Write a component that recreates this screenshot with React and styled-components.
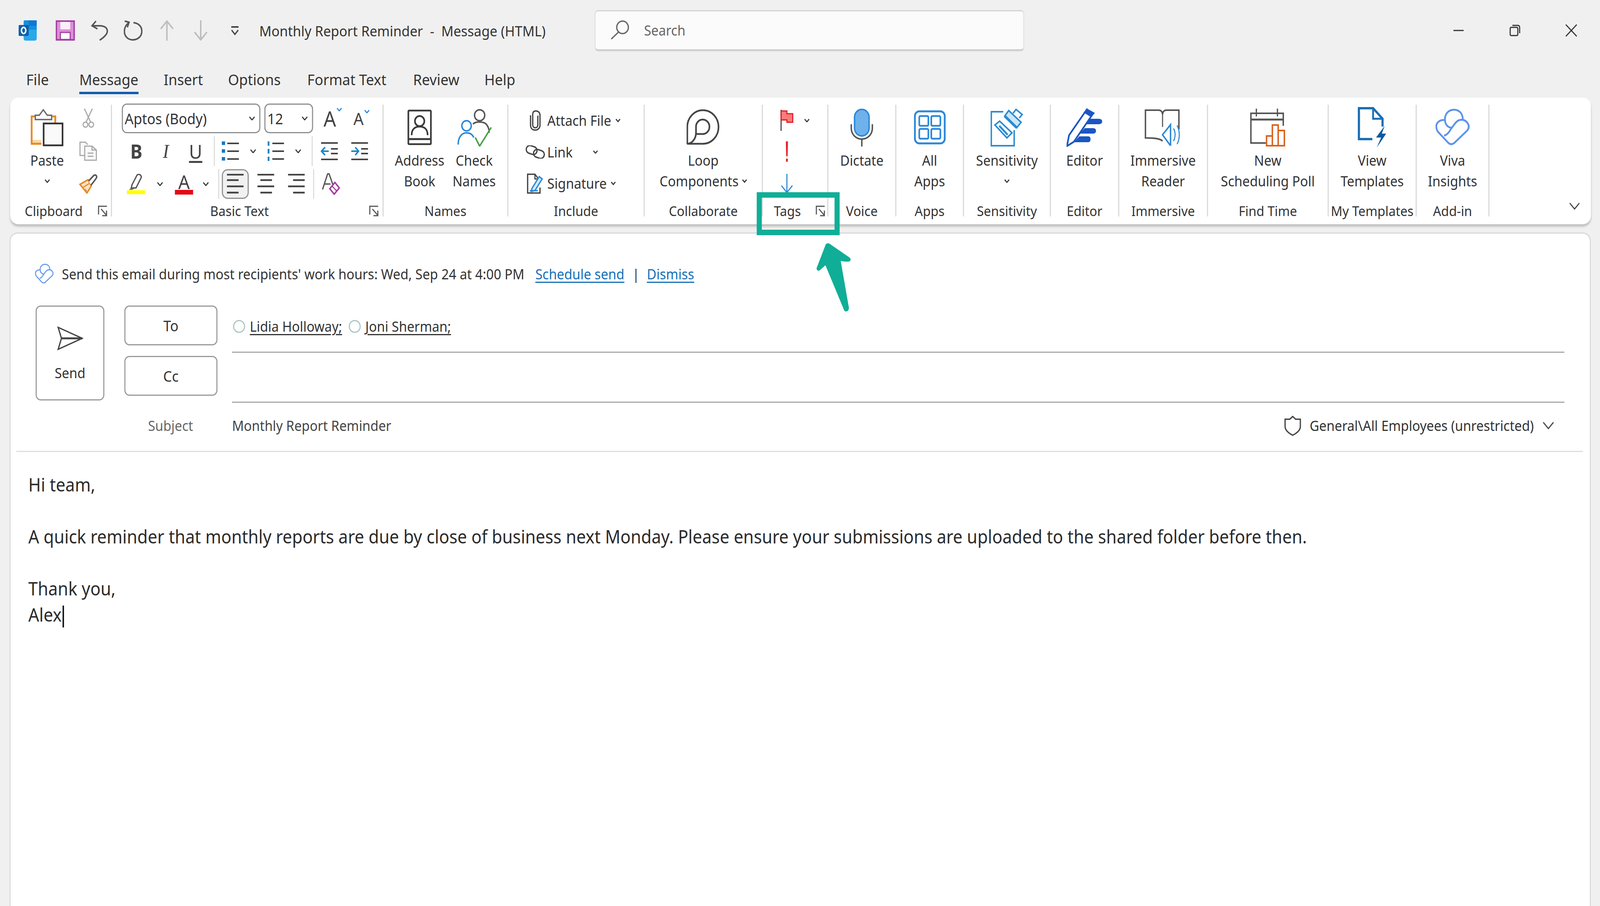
import React from "react";
import styled, { createGlobalStyle } from "styled-components";

const GlobalStyle = createGlobalStyle`
  html, body {
    margin: 0;
    padding: 0;
    background: #f0f0f0;
    overflow: hidden;
  }
  * {
    box-sizing: border-box;
  }
`;

const UI_FONT = `"Noto Sans", "Open Sans", sans-serif`;
const INK = "#3a3a3a";
const GREY = "#a8a8a8";
const BLUE = "#2b88d8";
const TEAL = "#10ae97";

const Chevron = ({ w = 16, color = INK }) => (
  <svg width={w} height={w * 0.65} viewBox="0 0 16 10.4" fill="none" stroke={color} strokeWidth={48 / w}>
    <path d="M1 1 L8 9 L15 1" />
  </svg>
);

const Launcher = () => (
  <svg width="28" height="30" viewBox="0 0 28 30" fill="none" stroke="#555" strokeWidth="3">
    <path d="M2 24 V3 H25" />
    <path d="M9 10 L24 26 M24 14 V27 H12" />
  </svg>
);

const OutlookLogo = () => (
  <svg width="52" height="52" viewBox="0 0 52 52">
    <rect x="14" y="0" width="36" height="30" rx="3" fill="#1490df" />
    <path d="M14 24 H50 V46 Q50 52 44 52 H20 Q14 52 14 46 Z" fill="#28a8ea" />
    <path d="M28 0 H50 V14 H28 Z" fill="#0f78d4" />
    <rect x="0" y="12" width="28" height="28" rx="3" fill="#0f5fa8" />
    <ellipse cx="14" cy="26" rx="6" ry="8" fill="none" stroke="#fff" strokeWidth="4" />
  </svg>
);

const SaveIcon = () => (
  <svg width="53" height="52" viewBox="0 0 53 52">
    <rect x="2" y="2" width="49" height="48" fill="#dd8fda" stroke="#a33ea1" strokeWidth="4" />
    <rect x="13" y="4" width="27" height="19" fill="#fbeefb" />
    <rect x="13" y="31" width="27" height="18" fill="#fff" stroke="#a33ea1" strokeWidth="3" />
  </svg>
);

const UndoIcon = () => (
  <svg width="48" height="52" viewBox="0 0 48 52" fill="none" stroke="#555" strokeWidth="4">
    <path d="M14 2 L3 14 L18 22" />
    <path d="M4 14 H24 C38 14 46 20 45 29 C44 38 32 46 24 51" />
  </svg>
);

const RedoIcon = () => (
  <svg width="52" height="52" viewBox="0 0 52 52" fill="none" stroke="#555" strokeWidth="4">
    <path d="M3 2 L15 5 L10 18" />
    <path d="M14 6 C6 12 2 20 2 28 C2 41 12 50 25 50 C39 50 50 41 50 28 C50 15 40 7 27 6" />
  </svg>
);

const StepArrow = ({ down }) => (
  <svg width="38" height="52" viewBox="0 0 38 52" fill="none" stroke="#bdbdbd" strokeWidth="4">
    {down ? <path d="M19 0 V50 M2 30 L19 50 L36 30" /> : <path d="M19 52 V2 M2 22 L19 2 L36 22" />}
  </svg>
);

const CustomizeIcon = () => (
  <svg width="24" height="24" viewBox="0 0 24 24" fill="none" stroke="#444" strokeWidth="4">
    <path d="M2 3 H22" />
    <path d="M3 11 L12 22 L21 11" strokeWidth="3.5" />
  </svg>
);

const SearchIcon = () => (
  <svg width="56" height="50" viewBox="0 0 56 50" fill="none" stroke="#666" strokeWidth="3.5">
    <circle cx="34" cy="18" r="16" />
    <path d="M23 30 L3 48" />
  </svg>
);

const WinIcon = ({ kind }) => (
  <svg width="36" height="36" viewBox="0 0 36 36" fill="none" stroke="#333" strokeWidth="3">
    {kind === "min" && <path d="M4 18 H32" />}
    {kind === "restore" && (
      <>
        <rect x="5" y="10" width="21" height="21" rx="3" />
        <path d="M11 5 H26 Q31 5 31 10 V25" />
      </>
    )}
    {kind === "close" && <path d="M3 3 L33 33 M33 3 L3 33" />}
  </svg>
);

const PasteIcon = () => (
  <svg width="91" height="97" viewBox="0 0 91 97" fill="none">
    <path d="M3 80 H30 V92 H3 Z" fill="#f9d9a8" />
    <path d="M12 20 H3 V90 H30" stroke="#e58a25" strokeWidth="5" />
    <path d="M60 20 H68 V36" stroke="#e58a25" strokeWidth="5" />
    <path d="M13 28 V17 H24 L35 3 L46 17 H58 V28 Z" fill="#fff" stroke="#666" strokeWidth="3.5" />
    <rect x="36" y="38" width="52" height="56" fill="#fafafa" stroke="#333" strokeWidth="4.5" />
  </svg>
);

const CutIcon = () => (
  <svg width="32" height="50" viewBox="0 0 32 50" fill="none" stroke={GREY} strokeWidth="3">
    <path d="M5 0 L22 34 M27 0 L10 34" />
    <circle cx="8" cy="41" r="6.5" />
    <circle cx="24" cy="41" r="6.5" />
  </svg>
);

const CopyIcon = () => (
  <svg width="52" height="50" viewBox="0 0 52 50" fill="#fafafa" stroke={GREY} strokeWidth="3">
    <path d="M18 36 H3 V2 H18 L24 8" />
    <path d="M16 12 H36 L48 22 V48 H16 Z" />
    <path d="M36 12 V22 H48 M24 30 H40 M24 38 H40" fill="none" />
  </svg>
);

const PainterIcon = () => (
  <svg width="52" height="50" viewBox="0 0 52 50" fill="none">
    <path d="M3 26 L25 14 L34 30 L22 48 Z" fill="#fbe3c4" stroke="#e58a25" strokeWidth="4" />
    <path d="M12 33 L28 24 M18 38 L22 48" stroke="#e58a25" strokeWidth="3" />
    <path d="M27 17 L41 3 Q48 0 49 7 Q49 10 33 28" fill="#fff" stroke="#555" strokeWidth="4" />
  </svg>
);

const ListIcon = ({ numbered }) => (
  <svg width="50" height="50" viewBox="0 0 50 50" fill="none">
    {[5, 25, 45].map((y, i) =>
      numbered ? (
        <NumberMark key={y} $y={y} />
      ) : (
        <rect key={y} x="1" y={y - 5} width="9" height="9" fill="#0f79c2" />
      )
    )}
    <path d="M16 5 H48 M16 25 H48 M16 45 H48" stroke="#444" strokeWidth="4" />
  </svg>
);

const NumberMark = styled.rect.attrs((p) => ({
  x: 3,
  y: p.$y - 6,
  width: 5,
  height: 12,
}))`
  fill: #1a86c8;
`;

const IndentIcon = ({ right }) => (
  <svg width="48" height="48" viewBox="0 0 48 48" fill="none">
    <path d="M1 3 H47 M1 45 H47 M28 18 H47 M28 30 H47" stroke="#444" strokeWidth="4" />
    {right ? (
      <path d="M1 24 H20 M12 14 L21 24 L12 34" stroke="#1a86c8" strokeWidth="4" />
    ) : (
      <path d="M22 24 H3 M12 14 L2 24 L12 34" stroke="#1a86c8" strokeWidth="4" />
    )}
  </svg>
);

const AlignIcon = ({ align }) => {
  const short = align === "left" ? "M0 16 H32 M0 48 H32" : align === "center" ? "M8 16 H40 M8 48 H40" : "M14 16 H46 M14 48 H46";
  return (
    <svg width="46" height="52" viewBox="0 0 46 52" fill="none" stroke="#444" strokeWidth="4.5">
      <path d="M0 2 H46 M0 32 H46" />
      <path d={short} />
    </svg>
  );
};

const HighlightIcon = () => (
  <svg width="50" height="52" viewBox="0 0 50 52">
    <path d="M14 28 L28 3 Q34 -1 38 4 Q41 8 38 12 L25 36 L12 36 Z" fill="#fff" stroke="#555" strokeWidth="3.5" />
    <path d="M11 36 H25 L14 41 H6 Z" fill="#666" />
    <rect x="0" y="42" width="50" height="10" fill="#ffff00" />
  </svg>
);

const EraserA = () => (
  <svg width="50" height="56" viewBox="0 0 50 56" fill="none">
    <path d="M2 42 L16 2 H20 L32 34 M8 28 H24" stroke="#555" strokeWidth="3.5" />
    <path d="M36 24 L48 38 L34 54 L22 40 Z" fill="#fff" stroke="#a33ea1" strokeWidth="4" />
    <path d="M28 33 L41 46" stroke="#a33ea1" strokeWidth="3" />
  </svg>
);

const BookIcon = () => (
  <svg width="68" height="92" viewBox="0 0 68 92" fill="none" stroke="#3a3a3a" strokeWidth="4.5">
    <rect x="3" y="3" width="62" height="86" rx="2" />
    <path d="M3 76 H65" strokeWidth="5" />
    <circle cx="34" cy="30" r="13" />
    <path d="M12 66 C12 50 22 44 34 44 C46 44 56 50 56 66" />
  </svg>
);

const CheckNamesIcon = () => (
  <svg width="95" height="97" viewBox="0 0 95 97" fill="none">
    <circle cx="62" cy="17" r="14" stroke="#555" strokeWidth="4" />
    <path d="M44 40 C48 32 76 32 82 42 C88 50 88 56 88 62" stroke="#555" strokeWidth="4" />
    <circle cx="26" cy="44" r="13" stroke={BLUE} strokeWidth="4" />
    <path d="M3 92 C3 74 12 62 26 62 C36 62 42 66 46 74" stroke={BLUE} strokeWidth="4" />
    <path d="M50 74 L62 96 L94 48" stroke="#44a047" strokeWidth="4" />
  </svg>
);

const ClipIcon = () => (
  <svg width="34" height="54" viewBox="0 0 34 54" fill="none" stroke="#444" strokeWidth="3.5">
    <path d="M24 15 V39 C24 44 20 46 17 46 C14 46 10 44 10 39 V12 C10 6 13 3 18 3 C26 3 30 8 30 14 V39 C30 47 24 52 17 52 C9 52 4 47 4 39 V14" />
  </svg>
);

const LinkIcon = () => (
  <svg width="54" height="34" viewBox="0 0 54 34" fill="none" stroke="#444" strokeWidth="3.5">
    <rect x="2" y="2" width="30" height="20" rx="10" transform="rotate(18 17 12)" />
    <rect x="22" y="12" width="30" height="20" rx="10" transform="rotate(18 37 22)" />
  </svg>
);

const SignatureIcon = () => (
  <svg width="46" height="52" viewBox="0 0 46 52" fill="none">
    <path d="M32 14 L22 2 H2 V50 H36 V36" stroke="#444" strokeWidth="3.5" />
    <path d="M22 2 V14 H32" stroke="#444" strokeWidth="3" />
    <path d="M14 38 L34 8 L42 14 L22 44 L12 46 Z" fill="#d3e8fa" stroke={BLUE} strokeWidth="3.5" />
    <path d="M8 44 H30" stroke={BLUE} strokeWidth="3.5" />
  </svg>
);

const LoopIcon = () => (
  <svg width="92" height="92" viewBox="0 0 92 92" fill="none" stroke="#444" strokeWidth="4.5">
    <path d="M2 89 V45 A43 43 0 1 1 45 88 H2 Z" />
    <path d="M26 62 V45 A18.5 18.5 0 1 1 44 63 H26" />
    <path d="M26 60 C26 76 14 88 2 88" />
  </svg>
);

const MicIcon = () => (
  <svg width="64" height="97" viewBox="0 0 64 97" fill="none">
    <rect x="12" y="2" width="40" height="68" rx="20" fill="#6fb1ea" stroke={BLUE} strokeWidth="4" />
    <path d="M3 40 V50 C3 66 16 78 32 78 C48 78 61 66 61 50 V40" stroke="#555" strokeWidth="4" />
    <path d="M32 78 V97" stroke="#555" strokeWidth="4" />
  </svg>
);

const AppsIcon = () => (
  <svg width="88" height="88" viewBox="0 0 88 88" fill="none" stroke={BLUE} strokeWidth="4.5">
    <rect x="3" y="3" width="82" height="82" rx="12" strokeWidth="5" />
    <rect x="15" y="15" width="25" height="25" rx="3" />
    <rect x="48" y="15" width="25" height="25" rx="3" />
    <rect x="15" y="48" width="25" height="25" rx="3" />
    <rect x="48" y="48" width="25" height="25" rx="3" />
  </svg>
);

const SensitivityIcon = () => (
  <svg width="90" height="97" viewBox="0 0 90 97" fill="none" stroke="#2b8ad0" strokeWidth="4">
    <path d="M35 8 H2 V95 H65 V55" />
    <path d="M12 42 L25 32 L59 62 L45 75 Z" fill="#f4f9fd" />
    <path d="M24 44 L47 67" strokeWidth="5" />
    <path d="M39 19 L50 5 L84 35 L72 49 Z" fill="#cfe6f7" />
    <path d="M39 19 L72 49" strokeWidth="7" />
    <path d="M62 12 L70 2 L87 15 L79 24" fill="#f4f9fd" />
  </svg>
);

const EditorIcon = () => (
  <svg width="100" height="100" viewBox="0 0 100 100">
    <path d="M58 28 H88 Q98 28 98 35 Q98 42 88 42 H48 Z" fill="#1a56c4" />
    <path d="M50 52 H73 Q81 52 81 59 Q81 66 73 66 H36 Z" fill="#1a56c4" />
    <path d="M35 73 H60 Q66 73 66 80 Q66 88 60 88 H21 Z" fill="#1a56c4" />
    <path d="M1 98 L7 70 L56 4 L72 16 L20 87 Z" fill="#fff" stroke="#1a56c4" strokeWidth="4.5" />
    <path d="M56 2 L78 13 L68 24 L47 12 Z" fill="#1a56c4" />
  </svg>
);

const ImmersiveIcon = () => (
  <svg width="102" height="94" viewBox="0 0 102 94" fill="none">
    <path d="M50 82 C44 76 30 74 3 74 V3 H40 C46 3 50 8 50 14 C50 8 54 3 60 3 H95 V52" stroke="#555" strokeWidth="4" />
    <path d="M50 14 V46" stroke="#555" strokeWidth="3" />
    <path d="M50 66 L72 40 V94 Z" fill="#fff" stroke={BLUE} strokeWidth="4" />
    <path d="M80 50 C86 58 86 72 80 82 M90 42 C98 56 98 76 90 90" stroke={BLUE} strokeWidth="3" />
  </svg>
);

const ScheduleIcon = () => (
  <svg width="98" height="97" viewBox="0 0 98 97" fill="none">
    <path d="M44 88 H3 V12 H92 V44" stroke="#555" strokeWidth="4" />
    <path d="M3 28 H92" stroke="#555" strokeWidth="5" />
    <path d="M18 0 V20 M76 0 V20" stroke="#555" strokeWidth="3.5" />
    <path d="M46 95 V70 H62 V42 H78 V56 H95 V95 Z M62 70 V95 M78 56 V95" fill="#fff" stroke="#d9601c" strokeWidth="4" />
  </svg>
);

const TemplateIcon = () => (
  <svg width="78" height="104" viewBox="0 0 78 104" fill="none">
    <path d="M40 82 H3 V3 H42 L68 30 V50" stroke="#1a6fb5" strokeWidth="6" />
    <path d="M42 3 V30 H68" stroke="#1a6fb5" strokeWidth="5" />
    <path d="M74 48 L50 78 H64 L52 104 L78 68 H66 Z" fill="#0b5a9e" />
  </svg>
);

const VivaIcon = ({ size = 96 }) => (
  <svg width={size} height={size} viewBox="0 0 100 100" fill="none" stroke="#5d93ea" strokeWidth="5">
    <path d="M28 32 C26 14 38 3 54 3 C68 3 78 12 79 28" />
    <path d="M28 31 C28 42 36 51 48 51" />
    <path d="M28 31 C14 28 2 38 3 48 Q3 56 8 62 L37 91 Q45 98 54 92 L92 58 Q100 48 92 38 Q84 28 72 30 C66 30 62 34 58 38 L45 54 Q36 70 25 72" />
    <path d="M27 80 L36 60" stroke="none" />
  </svg>
);

const SendIcon = () => (
  <svg width="72" height="62" viewBox="0 0 72 62" fill="none" stroke="#444" strokeWidth="3.5">
    <path d="M3 3 L69 31 L3 59 L12 31 Z" />
    <path d="M12 31 H69" strokeWidth="5" />
  </svg>
);

const ShieldIcon = () => (
  <svg width="46" height="52" viewBox="0 0 46 52" fill="none" stroke="#444" strokeWidth="3.5">
    <path d="M23 2 L31 9 L44 9 V28 C44 38 32 46 23 50 C14 46 2 38 2 28 V9 L15 9 Z" />
  </svg>
);

// the browser may cap the window below the 4400px the design is laid out at
const Viewport = styled.div`
  width: 100vw;
  height: 100vh;
  overflow: hidden;
`;

const Page = styled.div`
  position: relative;
  width: 4400px;
  height: 2319px;
  overflow: hidden;
  display: flex;
  flex-direction: column;
  transform-origin: 0 0;
  background: #f0f0f0;
  color: #2b2b2b;
  font-family: ${UI_FONT};
`;

const TitleBar = styled.div`
  height: 156px;
  display: flex;
  align-items: center;
  padding-left: 51px;
`;

const QuickItem = styled.div`
  display: flex;
  margin-right: ${(p) => p.$gap}px;
`;

const WindowTitle = styled.div`
  width: 922px;
  font-size: 37px;
  white-space: pre;
  color: #333;
`;

const SearchBox = styled.div`
  width: 1182px;
  height: 105px;
  display: flex;
  align-items: center;
  gap: 37px;
  padding-left: 40px;
  background: #fbfbfb;
  border: 3px solid #e2e2e2;
  border-top-color: #d4d4d4;
  border-bottom: 5px solid #cfcfcf;
  border-radius: 10px;
  font-size: 36px;
  color: #666;
`;

const WindowControls = styled.div`
  margin-left: auto;
  display: flex;
  gap: 119px;
  padding-right: 61px;
`;

const TabBar = styled.div`
  height: 94px;
  display: flex;
  padding-left: 72px;
`;

const Tab = styled.div`
  width: ${(p) => p.$w}px;
  padding-top: 21px;
  font-size: 39px;
  line-height: 52px;
  color: #333;

  span {
    display: inline-block;
    padding-bottom: 6px;
    border-bottom: 6px solid ${(p) => (p.$active ? "#0f5cad" : "transparent")};
  }
`;

const Ribbon = styled.div`
  height: 324px;
  margin: 0 25px 0 28px;
  padding: 18px 0 20px;
  display: flex;
  background: #fff;
  border-radius: 22px;
  box-shadow: 0 6px 6px rgba(0, 0, 0, 0.2);
`;

const Group = styled.div`
  width: ${(p) => p.$w}px;
  flex-shrink: 0;
  display: flex;
  flex-direction: column;
  border-right: 3px solid #d8d8d8;
`;

const GroupBody = styled.div`
  flex: 1;
  min-height: 0;
  padding-left: ${(p) => p.$pl ?? 0}px;
  display: flex;
  justify-content: ${(p) => p.$justify || "center"};
`;

const GroupFooter = styled.div`
  height: 44px;
  padding: 16px ${(p) => p.$pr ?? 0}px 0 ${(p) => p.$pl ?? 0}px;
  display: flex;
  align-items: center;
  justify-content: ${(p) => (p.$center ? "center" : "space-between")};
  font-size: 35px;
  line-height: 28px;
  color: #333;
  white-space: nowrap;
`;

const TallButton = styled.div`
  display: flex;
  flex-direction: column;
  align-items: center;
  width: ${(p) => (p.$w ? `${p.$w}px` : "auto")};
  font-size: 36px;
  line-height: 53px;
  text-align: center;
  white-space: nowrap;
  color: #333;
`;

const IconSlot = styled.div`
  height: 116px;
  display: flex;
  align-items: center;
  justify-content: center;
`;

const LabelLine = styled.div`
  display: flex;
  align-items: center;
  justify-content: center;
  gap: 10px;
  height: 53px;
`;

const SmallColumn = styled.div`
  width: 52px;
  display: flex;
  flex-direction: column;
  align-items: center;
  gap: 34px;
  padding-top: 10px;
`;

const ToolRows = styled.div`
  display: flex;
  flex-direction: column;
  gap: 8px;
  margin-top: -3px;
  padding-left: 27px;
`;

const ToolRow = styled.div`
  height: 76px;
  display: flex;
  align-items: center;
`;

const FieldBox = styled.div`
  width: ${(p) => p.$w}px;
  height: 76px;
  margin-right: ${(p) => p.$mr}px;
  padding: 0 12px 0 5px;
  display: flex;
  align-items: center;
  justify-content: space-between;
  border: 3px solid #8f8f8f;
  border-radius: 14px;
  font-size: 38px;
  color: #333;
`;

const Cell = styled.div`
  width: ${(p) => p.$w}px;
  display: flex;
  align-items: center;
  justify-content: center;
  flex-shrink: 0;
`;

const RowDivider = styled.div`
  width: 3px;
  height: 76px;
  margin: 0 ${(p) => p.$mr ?? 0}px 0 ${(p) => p.$ml ?? 0}px;
  flex-shrink: 0;
  background: #dcdcdc;
`;

const SizedA = styled.span`
  font-size: ${(p) => p.$size}px;
  line-height: 1;
  color: #444;
`;

const GrowWrap = styled.div`
  display: flex;
  align-items: flex-start;
  gap: 2px;
`;

const FormatGlyph = styled.span`
  font-family: ${(p) => (p.$italic ? `"Liberation Serif", serif` : UI_FONT)};
  font-size: 50px;
  font-weight: ${(p) => (p.$bold ? 700 : 400)};
  font-style: ${(p) => (p.$italic ? "italic" : "normal")};
  text-decoration: ${(p) => (p.$under ? "underline" : "none")};
  text-underline-offset: 6px;
  line-height: 1;
  color: #444;
`;

const ColorA = styled.div`
  width: 50px;
  display: flex;
  flex-direction: column;
  align-items: center;
  font-size: 50px;
  line-height: 42px;
  color: #444;

  &::after {
    content: "";
    width: 50px;
    height: 12px;
    background: #e50914;
  }
`;

const ActiveAlign = styled.div`
  width: 74px;
  height: 76px;
  display: flex;
  align-items: center;
  justify-content: center;
  flex-shrink: 0;
  background: #f1f1f1;
  border: 3px solid #8f8f8f;
  border-radius: 16px;
`;

const IncludeList = styled.div`
  display: flex;
  flex-direction: column;
  padding-left: 40px;
  width: 100%;
`;

const IncludeItem = styled.div`
  height: 84px;
  display: flex;
  align-items: center;
  font-size: 36px;
  color: #333;
`;

const ItemIconBox = styled.div`
  width: 67px;
  display: flex;
  justify-content: center;
`;

const ChevronGap = styled.span`
  display: flex;
  margin-left: ${(p) => p.$ml}px;
`;

const TagStack = styled.div`
  display: flex;
  flex-direction: column;
  align-items: flex-start;
  padding-left: 48px;
  width: 100%;
`;

const TagRow = styled.div`
  height: 84px;
  display: flex;
  align-items: center;
  gap: 30px;
`;

const RibbonCollapse = styled.div`
  margin-left: auto;
  margin-top: 250px;
  margin-right: 30px;
  display: flex;
`;

const ComposeCard = styled.div`
  flex: 1;
  margin: 21px 25px 0 26px;
  display: flex;
  flex-direction: column;
  background: #fff;
  border: 3px solid #d8d8d8;
  border-bottom: none;
  border-radius: 22px 22px 0 0;
`;

const InfoBar = styled.div`
  height: 66px;
  margin-top: 70px;
  padding-left: 67px;
  display: flex;
  align-items: center;
  font-size: 36px;
  color: #333;
  white-space: pre;
`;

const InfoLink = styled.a`
  color: #1570b8;
  text-decoration: underline;
  text-underline-offset: 6px;
`;

const InfoText = styled.span`
  margin-left: ${(p) => p.$ml}px;
`;

const HeaderRow = styled.div`
  margin-top: 48px;
  padding-left: 69px;
  padding-right: 70px;
  display: flex;
`;

const SendButton = styled.div`
  width: 189px;
  height: 243px;
  padding-top: 50px;
  display: flex;
  flex-direction: column;
  align-items: center;
  gap: 33px;
  border: 3px solid #9a9a9a;
  border-radius: 14px;
  font-size: 36px;
  color: #333;
`;

const AddressButtons = styled.div`
  width: 256px;
  margin-left: 55px;
  display: flex;
  flex-direction: column;
  gap: 27px;
`;

const AddressButton = styled.div`
  height: 102px;
  display: flex;
  align-items: center;
  justify-content: center;
  border: 3px solid #9a9a9a;
  border-radius: 14px;
  font-size: 38px;
  color: #333;
`;

const AddressFields = styled.div`
  flex: 1;
  margin-left: 40px;
  display: flex;
  flex-direction: column;
`;

const AddressField = styled.div`
  height: ${(p) => p.$h}px;
  display: flex;
  align-items: flex-start;
  padding: 29px 0 0 3px;
  border-bottom: 3px solid #a8a8a8;
  font-size: 36px;
  color: #333;
  white-space: nowrap;
`;

const Recipient = styled.span`
  display: inline-flex;
  align-items: center;
  margin-right: 18px;
  gap: 13px;

  u {
    text-underline-offset: 6px;
  }
`;

const Presence = styled.i`
  width: 33px;
  height: 33px;
  border-radius: 50%;
  border: 3px solid #a9c6c2;
  flex-shrink: 0;
`;

const SubjectRow = styled.div`
  height: 126px;
  margin: 0 19px 0 16px;
  padding: 0 79px 6px 362px;
  display: flex;
  align-items: center;
  border-bottom: 3px solid #dedede;
  font-size: 36px;
`;

const SubjectLabel = styled.div`
  width: 231px;
  color: #666;
`;

const SubjectText = styled.div`
  color: #444;
`;

const ClassificationBox = styled.div`
  margin-left: auto;
  display: flex;
  align-items: center;
  color: #333;
`;

const ClassificationText = styled.span`
  margin: 0 24px;
`;

const MessageBody = styled.div`
  margin-top: 50px;
  padding-left: 49px;
  font-size: 46.6px;
  line-height: 66.5px;
  color: #2b2b2b;
`;

const BodyLine = styled.div`
  min-height: 66.5px;
  white-space: nowrap;
`;

const Caret = styled.span`
  display: inline-block;
  width: 4px;
  height: 56px;
  margin-left: 2px;
  vertical-align: middle;
  background: #111;
`;

const TealBox = styled.div`
  position: absolute;
  left: 2081px;
  top: 492px;
  width: 228px;
  height: 110px;
  border: 14px solid ${TEAL};
`;

const TealArrow = styled.svg`
  position: absolute;
  left: 2240px;
  top: 615px;
`;

const PasteSlot = styled.div`
  margin-left: 14px;
`;

const tabs = [
  ["File", 146],
  ["Message", 232, true],
  ["Insert", 177],
  ["Options", 218],
  ["Format Text", 291],
  ["Review", 196],
  ["Help", 84],
];

const Tall = ({ icon, lines, chevron, w }) => (
  <TallButton $w={w}>
    <IconSlot>{icon}</IconSlot>
    {lines.map((line, i) => (
      <LabelLine key={line}>
        {line}
        {chevron === "inline" && i === lines.length - 1 && <Chevron w={13} />}
      </LabelLine>
    ))}
    {chevron === "below" && (
      <LabelLine>
        <Chevron w={14} />
      </LabelLine>
    )}
  </TallButton>
);

const SingleGroup = ({ w, label, ...rest }) => (
  <Group $w={w}>
    <GroupBody>
      <Tall {...rest} />
    </GroupBody>
    <GroupFooter $center>{label}</GroupFooter>
  </Group>
);

export default function App() {
  const fit = window.innerWidth / 4400;

  return (
    <Viewport>
      <GlobalStyle />
      <Page style={{ transform: `scaleX(${fit})` }}>
        <TitleBar>
          <QuickItem $gap={50}><OutlookLogo /></QuickItem>
          <QuickItem $gap={44}><SaveIcon /></QuickItem>
          <QuickItem $gap={42}><UndoIcon /></QuickItem>
          <QuickItem $gap={48}><RedoIcon /></QuickItem>
          <QuickItem $gap={55}><StepArrow /></QuickItem>
          <QuickItem $gap={63}><StepArrow down /></QuickItem>
          <QuickItem $gap={55}><CustomizeIcon /></QuickItem>
          <WindowTitle>Monthly Report Reminder  -  Message (HTML)</WindowTitle>
          <SearchBox>
            <SearchIcon />
            Search
          </SearchBox>
          <WindowControls>
            <WinIcon kind="min" />
            <WinIcon kind="restore" />
            <WinIcon kind="close" />
          </WindowControls>
        </TitleBar>

        <TabBar>
          {tabs.map(([name, w, active]) => (
            <Tab key={name} $w={w} $active={active}>
              <span>{name}</span>
            </Tab>
          ))}
        </TabBar>

        <Ribbon>
          <Group $w={280}>
            <GroupBody $justify="flex-start">
              <PasteSlot>
                <TallButton $w={175}>
                  <IconSlot><PasteIcon /></IconSlot>
                  <LabelLine>Paste</LabelLine>
                  <LabelLine><Chevron w={14} /></LabelLine>
                </TallButton>
              </PasteSlot>
              <SmallColumn>
                <CutIcon />
                <CopyIcon />
                <PainterIcon />
              </SmallColumn>
            </GroupBody>
            <GroupFooter $pl={40} $pr={8}>
              Clipboard
              <Launcher />
            </GroupFooter>
          </Group>

          <Group $w={747}>
            <GroupBody $justify="flex-start">
              <ToolRows>
                <ToolRow>
                  <FieldBox $w={381} $mr={11}>
                    Aptos (Body)
                    <Chevron />
                  </FieldBox>
                  <FieldBox $w={134} $mr={24}>
                    12
                    <Chevron />
                  </FieldBox>
                  <Cell $w={60}>
                    <GrowWrap>
                      <SizedA $size={54}>A</SizedA>
                      <Chevron w={14} color={BLUE} />
                    </GrowWrap>
                  </Cell>
                  <Cell $w={24} />
                  <Cell $w={50}>
                    <GrowWrap>
                      <SizedA $size={44}>A</SizedA>
                      <Chevron w={14} color={BLUE} />
                    </GrowWrap>
                  </Cell>
                </ToolRow>
                <ToolRow>
                  <Cell $w={80}><FormatGlyph $bold>B</FormatGlyph></Cell>
                  <Cell $w={82}><FormatGlyph $italic>I</FormatGlyph></Cell>
                  <Cell $w={82}><FormatGlyph $under>U</FormatGlyph></Cell>
                  <RowDivider $ml={9} $mr={18} />
                  <Cell $w={50}><ListIcon /></Cell>
                  <Cell $w={74}><Chevron /></Cell>
                  <Cell $w={50}><ListIcon numbered /></Cell>
                  <Cell $w={74}><Chevron /></Cell>
                  <RowDivider $mr={22} />
                  <Cell $w={48}><IndentIcon /></Cell>
                  <Cell $w={35} />
                  <Cell $w={48}><IndentIcon right /></Cell>
                </ToolRow>
                <ToolRow>
                  <Cell $w={14} />
                  <Cell $w={50}><HighlightIcon /></Cell>
                  <Cell $w={82}><Chevron /></Cell>
                  <Cell $w={50}><ColorA>A</ColorA></Cell>
                  <Cell $w={69}><Chevron /></Cell>
                  <RowDivider $mr={7} />
                  <ActiveAlign><AlignIcon align="left" /></ActiveAlign>
                  <Cell $w={24} />
                  <Cell $w={46}><AlignIcon align="center" /></Cell>
                  <Cell $w={38} />
                  <Cell $w={46}><AlignIcon align="right" /></Cell>
                  <Cell $w={23} />
                  <RowDivider $mr={21} />
                  <Cell $w={50}><EraserA /></Cell>
                </ToolRow>
              </ToolRows>
            </GroupBody>
            <GroupFooter $pl={270} $pr={9}>
              Basic Text
              <Launcher />
            </GroupFooter>
          </Group>

          <Group $w={343}>
            <GroupBody $pl={8}>
              <Tall w={150} icon={<BookIcon />} lines={["Address", "Book"]} />
              <Tall w={150} icon={<CheckNamesIcon />} lines={["Check", "Names"]} />
            </GroupBody>
            <GroupFooter $center>Names</GroupFooter>
          </Group>

          <Group $w={375}>
            <GroupBody>
              <IncludeList>
                <IncludeItem>
                  <ItemIconBox><ClipIcon /></ItemIconBox>
                  Attach File
                  <ChevronGap $ml={12}><Chevron w={13} /></ChevronGap>
                </IncludeItem>
                <IncludeItem>
                  <ItemIconBox><LinkIcon /></ItemIconBox>
                  Link
                  <ChevronGap $ml={56}><Chevron w={13} /></ChevronGap>
                </IncludeItem>
                <IncludeItem>
                  <ItemIconBox><SignatureIcon /></ItemIconBox>
                  Signature
                  <ChevronGap $ml={12}><Chevron w={13} /></ChevronGap>
                </IncludeItem>
              </IncludeList>
            </GroupBody>
            <GroupFooter $center>Include</GroupFooter>
          </Group>

          <SingleGroup w={325} label="Collaborate" icon={<LoopIcon />} lines={["Loop", "Components"]} chevron="inline" />

          <Group $w={180}>
            <GroupBody>
              <TagStack>
                <TagRow>
                  <svg width="36" height="54" viewBox="0 0 36 54" fill="none">
                    <path d="M2 0 V54" stroke="#444" strokeWidth="3" />
                    <path d="M2 3 H18 V10 H34 V32 H18 V26 H2 Z" fill="#fb7a7a" stroke="#e01b24" strokeWidth="3" />
                  </svg>
                  <Chevron w={14} />
                </TagRow>
                <TagRow>
                  <svg width="36" height="54" viewBox="0 0 36 54" fill="#e5242a">
                    <path d="M15 0 H21 L20 38 H16 Z" />
                    <rect x="15.5" y="44" width="5" height="8" />
                  </svg>
                </TagRow>
                <TagRow>
                  <svg width="36" height="50" viewBox="0 0 36 50" fill="none" stroke={BLUE} strokeWidth="3">
                    <path d="M18 0 V48 M3 30 L18 48 L33 30" />
                  </svg>
                </TagRow>
              </TagStack>
            </GroupBody>
            <GroupFooter $pl={30} $pr={4}>
              Tags
              <Launcher />
            </GroupFooter>
          </Group>

          <SingleGroup w={187} label="Voice" icon={<MicIcon />} lines={["Dictate"]} />
          <SingleGroup w={186} label="Apps" icon={<AppsIcon />} lines={["All", "Apps"]} />
          <SingleGroup w={239} label="Sensitivity" icon={<SensitivityIcon />} lines={["Sensitivity"]} chevron="below" />
          <SingleGroup w={188} label="Editor" icon={<EditorIcon />} lines={["Editor"]} />
          <SingleGroup w={244} label="Immersive" icon={<ImmersiveIcon />} lines={["Immersive", "Reader"]} />
          <SingleGroup w={332} label="Find Time" icon={<ScheduleIcon />} lines={["New", "Scheduling Poll"]} />
          <SingleGroup w={242} label="My Templates" icon={<TemplateIcon />} lines={["View", "Templates"]} />
          <SingleGroup w={200} label="Add-in" icon={<VivaIcon />} lines={["Viva", "Insights"]} />

          <RibbonCollapse>
            <Chevron w={30} color="#444" />
          </RibbonCollapse>
        </Ribbon>

        <ComposeCard>
          <InfoBar>
            <VivaIcon size={52} />
            <InfoText $ml={22}>Send this email during most recipients' work hours: Wed, Sep 24 at 4:00 PM</InfoText>
            <InfoText $ml={30}><InfoLink>Schedule send</InfoLink></InfoText>
            <InfoText $ml={22}>|</InfoText>
            <InfoText $ml={20}><InfoLink>Dismiss</InfoLink></InfoText>
          </InfoBar>

          <HeaderRow>
            <SendButton>
              <SendIcon />
              Send
            </SendButton>
            <AddressButtons>
              <AddressButton>To</AddressButton>
              <AddressButton>Cc</AddressButton>
            </AddressButtons>
            <AddressFields>
              <AddressField $h={121}>
                <Recipient>
                  <Presence />
                  <u>Lidia Holloway;</u>
                </Recipient>
                <Recipient>
                  <Presence />
                  <u>Joni Sherman;</u>
                </Recipient>
              </AddressField>
              <AddressField $h={128} />
            </AddressFields>
          </HeaderRow>

          <SubjectRow>
            <SubjectLabel>Subject</SubjectLabel>
            <SubjectText>Monthly Report Reminder</SubjectText>
            <ClassificationBox>
              <ShieldIcon />
              <ClassificationText>General\All Employees (unrestricted)</ClassificationText>
              <Chevron w={32} color="#444" />
            </ClassificationBox>
          </SubjectRow>

          <MessageBody>
            <BodyLine>Hi team,</BodyLine>
            <BodyLine />
            <BodyLine>A quick reminder that monthly reports are due by close of business next Monday. Please ensure your submissions are uploaded to the shared folder before then.</BodyLine>
            <BodyLine />
            <BodyLine>Thank you,</BodyLine>
            <BodyLine>Alex<Caret /></BodyLine>
          </MessageBody>
        </ComposeCard>

        <TealBox />
        <TealArrow width="110" height="190" viewBox="0 0 110 190">
          <path d="M31 10 Q37 5 43 10 L96 44 Q103 50 96 54 Q90 56 72 53 L94 170 Q96 180 88 182 Q82 183 80 176 L30 64 L14 77 Q8 80 6 74 Q5 71 7 68 Z" fill={TEAL} />
        </TealArrow>
      </Page>
    </Viewport>
  );
}
